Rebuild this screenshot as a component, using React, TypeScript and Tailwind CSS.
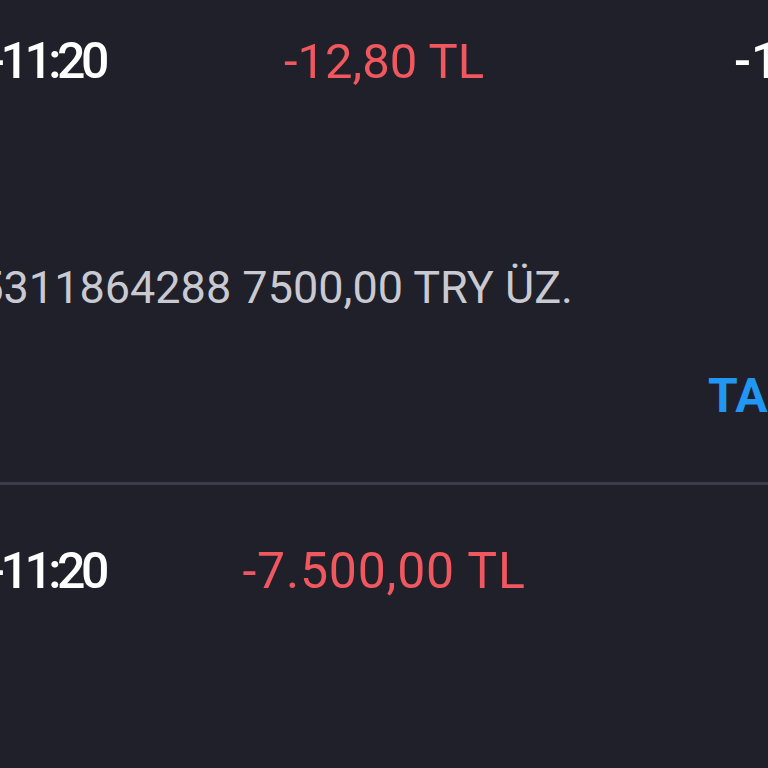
export default function App() {
  return (
    <div
      className="w-[768px] h-[768px] overflow-hidden bg-[#1f2029]"
      style={{ fontFamily: 'Roboto, "Noto Sans", sans-serif' }}
    >
      {/* first transaction */}
      <div className="grid grid-cols-[1fr_auto_1fr] items-center h-[122px] whitespace-nowrap">
        <div className="ml-[-12px] text-[50px] font-medium tracking-[-4.5px] text-white leading-none">-11:20</div>
        <div className="text-[49px] text-[#f0575f] leading-none">-12,80 TL</div>
        <div className="overflow-hidden">
          <div className="ml-[250px] text-[50px] font-medium text-white leading-none">-12,80 TL</div>
        </div>
      </div>

      <div className="mt-[143px] ml-[-47px] whitespace-nowrap text-[45px] text-[#c9cad1] leading-none">
        05311864288 7500,00 TRY ÜZ.
      </div>

      <div className="mt-[62px] overflow-hidden whitespace-nowrap">
        <div className="ml-[708px] text-[48px] font-bold text-[#2196f3] leading-none">TAMAM</div>
      </div>

      <div className="mt-[62px] h-[3px] bg-[#3a3c48]" />

      {/* second transaction */}
      <div className="grid grid-cols-[1fr_auto_1fr] items-center h-[172px] whitespace-nowrap">
        <div className="ml-[-12px] text-[50px] font-medium tracking-[-4.5px] text-white leading-none">-11:20</div>
        <div className="text-[50px] tracking-[0.8px] text-[#f0575f] leading-none">-7.500,00 TL</div>
        <div />
      </div>
    </div>
  );
}
